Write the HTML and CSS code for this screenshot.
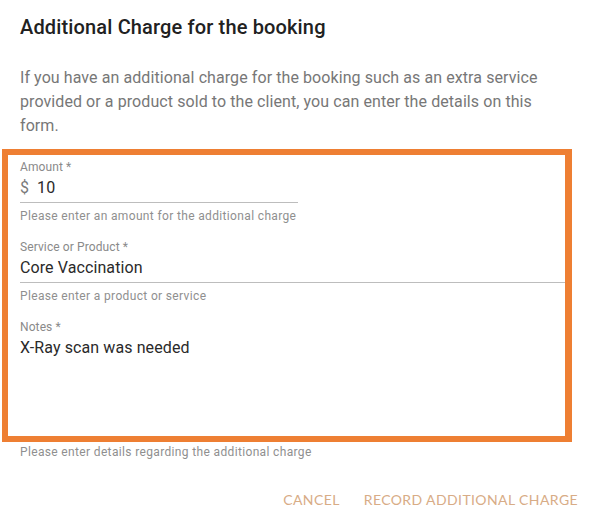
FILE: index.html
```html
<!DOCTYPE html>
<html lang="en">
<head>
<meta charset="utf-8">
<title>Additional Charge</title>
<link rel="stylesheet" href="styles.css">
</head>
<body>
<div class="dialog">
  <h2 class="title">Additional Charge for the booking</h2>
  <p class="desc">If you have an additional charge for the booking such as an extra service provided or a product sold to the client, you can enter the details on this form.</p>
  <div class="form">
    <div class="field field-short">
      <div class="label">Amount *</div>
      <div class="control"><span class="prefix">$</span><span class="value">10</span></div>
      <div class="helper">Please enter an amount for the additional charge</div>
    </div>
    <div class="field">
      <div class="label">Service or Product *</div>
      <div class="control"><span class="value">Core Vaccination</span></div>
      <div class="helper">Please enter a product or service</div>
    </div>
    <div class="field">
      <div class="label">Notes *</div>
      <div class="control control-area"><span class="value">X-Ray scan was needed</span></div>
      <div class="helper">Please enter details regarding the additional charge</div>
    </div>
  </div>
  <div class="actions">
    <span class="btn">CANCEL</span>
    <span class="btn">RECORD ADDITIONAL CHARGE</span>
  </div>
</div>
<div class="highlight"></div>
</body>
</html>
```

FILE: styles.css
```css
html, body {
  margin: 0;
  padding: 0;
  background: #ffffff;
}
body {
  font-family: Roboto, "Liberation Sans", Arial, sans-serif;
  position: relative;
  width: 593px;
  height: 520px;
  overflow: hidden;
}
.dialog {
  padding: 11px 15px 0 20px;
}
.title {
  margin: 0;
  font-size: 20px;
  line-height: 32px;
  font-weight: 500;
  letter-spacing: 0.15px;
  color: #212121;
}
.desc {
  margin: 23px 13px 0 0;
  font-size: 16px;
  line-height: 24px;
  letter-spacing: 0.08px;
  color: #777777;
}
.form {
  margin: 21px 13px 0 0;
  display: flex;
  flex-direction: column;
  gap: 15px;
}
.field {
  display: flex;
  flex-direction: column;
}
.field-short {
  width: 278px;
}
.label {
  font-size: 12px;
  line-height: 16px;
  letter-spacing: 0.1px;
  color: #8a8a8a;
  white-space: nowrap;
}
.control {
  margin-top: 1px;
  padding-bottom: 2px;
  border-bottom: 1px solid #bdbdbd;
  display: flex;
  align-items: flex-start;
  font-size: 16px;
  line-height: 24px;
  letter-spacing: 0.1px;
}
.control-area {
  height: 100px;
}
.prefix {
  color: #7a7a7a;
  margin-right: 8px;
}
.value {
  color: #2a2a2a;
}
.helper {
  margin-top: 5px;
  font-size: 12px;
  line-height: 16px;
  letter-spacing: 0.35px;
  color: #8f8f8f;
  white-space: nowrap;
}
.actions {
  margin-top: 30px;
  display: flex;
  justify-content: flex-end;
  gap: 24px;
}
.btn {
  font-family: Lato, "Liberation Sans", sans-serif;
  font-size: 14px;
  line-height: 20px;
  letter-spacing: 0.4px;
  color: #d8ac86;
}
.highlight {
  position: absolute;
  left: 2px;
  top: 149px;
  width: 557px;
  height: 281px;
  border-style: solid;
  border-color: #ee7f33;
  border-width: 6px 7px 6px 6px;
}
```
